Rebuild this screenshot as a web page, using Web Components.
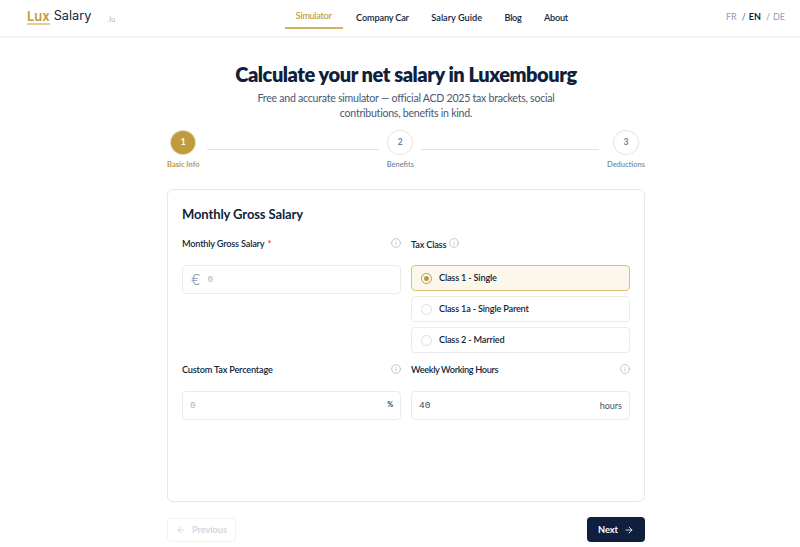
<!DOCTYPE html>
<html lang="en"><head><meta charset="utf-8"><title>Lux Salary</title>
<style>
html,body{margin:0;padding:0;background:#fff;height:547px;overflow:hidden}
body{font-family:Lato,"Noto Sans",sans-serif;color:#0f1f3d}
</style></head><body>
<app-header></app-header>
<salary-page></salary-page>
<script>
const INFO=(s=10)=>`<svg width="${s}" height="${s}" viewBox="0 0 24 24" fill="none" stroke="#a3a8b2" stroke-width="1.5" stroke-linecap="round"><circle cx="12" cy="12" r="10.5"/><path d="M12 16.5v-5M12 7.8h.01"/></svg>`;
function def(name,css,html){customElements.define(name,class extends HTMLElement{
  connectedCallback(){if(this.shadowRoot)return;const r=this.attachShadow({mode:'open'});
  const a=k=>this.getAttribute(k)||'';r.innerHTML=`<style>${css}</style>`+(typeof html==='function'?html(a,this):html);}
});}
def('app-header',`
:host{display:flex;height:36px;border-bottom:2px solid #f2f2f1;align-items:stretch;padding:0 15px 0 27px}
.logo{display:flex;align-items:center;font:400 12.7px/1 "Inter",sans-serif;color:#0f1f3d;width:258px;flex:none;padding-bottom:3px;box-sizing:border-box}
.lux{color:#bf9b3e;font-weight:600;font-size:13px;border-bottom:2px solid #e2cd94;line-height:14px;margin-right:4px}
.tld{font-size:7px;color:#a9b2c2;margin-left:16px;padding-top:5px}
nav{display:flex;gap:22.5px;font:600 9.2px/1 Lato,sans-serif;color:#0f1f3d;align-items:center}
nav a{display:flex;align-items:center;height:100%;white-space:nowrap;padding-top:0;padding-bottom:1px;box-sizing:border-box}
nav a.on{color:#c19f49;letter-spacing:-.3px;padding:7px 11px 2px 10.5px;margin:0 -9px 0 0;height:29px;align-self:flex-start;border-bottom:2px solid #d3b263}
nav a.tight{letter-spacing:-.3px}
nav a.car{letter-spacing:-.18px}
.lang{margin-left:auto;display:flex;align-items:center;font:400 9px/1 Lato,sans-serif;color:#8f9bb3;padding-bottom:3px;white-space:pre}
.lang b{color:#0f1f3d;font-weight:700}
.lang span,.lang b{margin-right:5px}
.lang span:last-child{margin-right:0}
.lang .s{margin-right:3px}
`,`<div class="logo"><span class="lux">Lux</span><span>Salary</span><span class="tld">.lu</span></div>
<nav><a class="on">Simulator</a><a class="car">Company Car</a><a>Salary Guide</a><a class="tight">Blog</a><a class="tight">About</a></nav>
<div class="lang"><span>FR</span><span class="s" style="color:#55627b">/</span><b>EN</b><span class="s">/</span><span>DE</span></div>`);

def('step-item',`
:host{display:flex;flex-direction:column;align-items:center;flex:none}
.c{width:26px;height:25px;border-radius:50%;border:1.5px solid #e8e3d8;box-sizing:border-box;display:flex;align-items:center;justify-content:center;font:700 8.5px/1 Lato,sans-serif;color:#6c7f9f;background:#fff}
.l{font:500 7.5px/1 Lato,sans-serif;color:#6c7f9f;margin-top:6px;white-space:nowrap;height:8px}
:host([active]) .c{background:#bf9b3e;border-color:#e6dcc0;color:#fff}
:host([active]) .l{color:#bb973d;font-weight:700}
`,(a)=>`<div class="c">${a('n')}</div><div class="l">${a('label')}</div>`);

def('step-line',`:host{display:block;height:1px;background:#e4e1da;margin:19px 7.5px 0}`,``);

def('form-label',`
:host{display:flex;align-items:center;justify-content:space-between;height:14px;font:600 9.2px/14px Lato,sans-serif;letter-spacing:-.2px;color:#0f1f3d}
.t{display:flex;align-items:center;gap:3px}
.r{color:#ef4444;margin-left:3px;font-weight:700}
svg{display:block;margin-bottom:2px}
.t svg{margin-bottom:3px}
`,(a,el)=>{const star=el.hasAttribute('required')?'<span class="r">*</span>':'';const i=INFO(10);
 return el.hasAttribute('inline')?`<span class="t"><span style="padding-top:2px">${a('text')}</span>${i}</span>`
 :`<span class="t"><span>${a('text')}${star}</span></span>${i}`;});

def('text-field',`
:host{display:flex;align-items:center;height:29px;box-sizing:border-box;border:1px solid #ecebe6;border-radius:4px;background:#fff;padding:0 7px;gap:7px;font:400 9.5px/1 "Liberation Mono",monospace;color:#a9b2c2}
.v{flex:1}
:host([filled]) .v{color:#3a4760}
.pre{font:300 14px/1 "Inter",sans-serif;color:#8f9bb3;margin-left:1px}
.suf{font:400 9px/1 Lato,sans-serif;color:#43506a}
.suf.m{font:700 9px/1 "Liberation Mono",monospace}
`,(a)=>`${a('prefix')?`<span class="pre">${a('prefix')}</span>`:''}<span class="v">${a('value')}</span>${a('suffix')?`<span class="suf ${a('suffix')=='%'?'m':''}">${a('suffix')}</span>`:''}`);

def('radio-option',`
:host{display:flex;align-items:center;height:26px;box-sizing:border-box;border:1px solid #ecebe6;border-radius:4px;padding:0 9px;gap:7px;background:#fff;font:600 9.2px/1 Lato,sans-serif;letter-spacing:-.2px;color:#0f1f3d;white-space:nowrap}
.d{width:11px;height:11px;border-radius:50%;border:1px solid #e2ded5;box-sizing:border-box;display:flex;align-items:center;justify-content:center;flex:none}
:host([checked]){background:#fbf7ea;border-color:#dcc279}
:host([checked]) .d{border:1.5px solid #bf9b3e}
:host([checked]) .d i{display:block;width:5px;height:5px;border-radius:50%;background:#bf9b3e}
`,(a)=>`<span class="d"><i></i></span><span>${a('text')}</span>`);

def('nav-button',`
:host{display:inline-flex;align-items:center;justify-content:center;gap:6px;box-sizing:border-box;height:25px;border-radius:4px;font:700 9.2px/1 Lato,sans-serif;white-space:nowrap}
:host([kind=prev]){width:69px;border:1px solid #f3f2f0;color:#ccd2dc;background:#fff;font-weight:600;height:24px;margin-top:1px}
:host([kind=next]){width:58px;background:#0f1f3d;color:#fff}
svg{display:block}
`,(a)=>a('kind')=='prev'
?`<svg width="10" height="10" viewBox="0 0 24 24" fill="none" stroke="#ccd2dc" stroke-width="2" stroke-linecap="round" stroke-linejoin="round"><path d="M19 12H5M12 19l-7-7 7-7"/></svg><slot></slot>`
:`<slot></slot><svg width="10" height="10" viewBox="0 0 24 24" fill="none" stroke="#fff" stroke-width="2" stroke-linecap="round" stroke-linejoin="round"><path d="M5 12h14M12 5l7 7-7 7"/></svg>`);

def('salary-card',`
:host{display:block;height:313px;box-sizing:border-box;border:1px solid #e9e7e1;border-radius:6px;padding:16px 14px;margin-top:20px;background:#fff}
h2{margin:0;font:700 13px/16px Lato,sans-serif;letter-spacing:-.1px;color:#0f1f3d;height:16px}
.grid{display:grid;grid-template-columns:1fr 1fr;column-gap:10px;margin-top:15px}
.stack{display:flex;flex-direction:column;gap:5px;margin-top:14px}
text-field{margin-top:14px}
`,`<h2>Monthly Gross Salary</h2>
<div class="grid">
<div><form-label required text="Monthly Gross Salary"></form-label><text-field prefix="€" value="0"></text-field></div>
<div><form-label inline text="Tax Class"></form-label><div class="stack">
<radio-option checked text="Class 1 - Single"></radio-option><radio-option text="Class 1a - Single Parent"></radio-option><radio-option text="Class 2 - Married"></radio-option></div></div>
</div>
<div class="grid" style="margin-top:10px">
<div><form-label text="Custom Tax Percentage"></form-label><text-field value="0" suffix="%"></text-field></div>
<div><form-label style="letter-spacing:-.36px" text="Weekly Working Hours"></form-label><text-field filled value="40" suffix="hours"></text-field></div>
</div>`);

def('salary-page',`
:host{display:block;width:478px;margin-left:167px}
h1{margin:0;padding-top:25px;text-align:center;font:800 20px/22px Lato,sans-serif;letter-spacing:-.44px;color:#0f1f3d;white-space:nowrap}
p{margin:6px auto 0;width:330px;text-align:center;font:400 10.6px/15px Lato,sans-serif;letter-spacing:-.26px;color:#4a5770}
.steps{display:flex;margin-top:9px;align-items:flex-start}
.foot{display:flex;justify-content:space-between;margin-top:15px}
`,`<h1>Calculate your net salary in Luxembourg</h1>
<p>Free and accurate simulator — official ACD 2025 tax brackets, social contributions, benefits in kind.</p>
<div class="steps"><step-item active n="1" label="Basic Info"></step-item><step-line style="flex:173 1 0"></step-line><step-item n="2" label="Benefits"></step-item><step-line style="flex:179 1 0"></step-line><step-item n="3" label="Deductions"></step-item></div>
<salary-card></salary-card>
<div class="foot"><nav-button kind="prev">Previous</nav-button><nav-button kind="next">Next</nav-button></div>`);
</script>
</body></html>
